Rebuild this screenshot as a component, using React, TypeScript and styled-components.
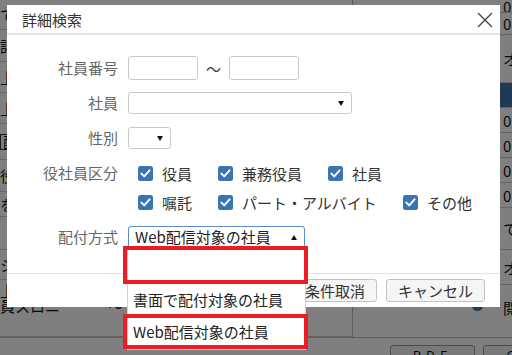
import React from "react";
import styled, { createGlobalStyle } from "styled-components";

const Global = createGlobalStyle`
  html, body { margin: 0; padding: 0; }
  body {
    width: 512px;
    height: 355px;
    overflow: hidden;
    font-family: "Noto Sans CJK JP", "Noto Sans", sans-serif;
  }
`;

const FONT = `"Noto Sans CJK JP", "Noto Sans", sans-serif`;

const Screen = styled.div`
  position: relative;
  width: 512px;
  height: 355px;
  overflow: hidden;
  background: #fff;
`;

/* ---------- background page ---------- */
const BgPage = styled.div`
  display: grid;
  grid-template-columns: 353px 159px;
  grid-template-rows: 337px 18px;
  height: 355px;
  font-family: ${FONT};
  font-size: 15px;
  color: #111;
`;

const BgLeft = styled.div`
  display: flex;
  flex-direction: column;
  border-right: 1px solid #bdbdbd;
`;

const BgRow = styled.div<{ $h: number; $top?: boolean }>`
  height: ${(p) => p.$h}px;
  box-sizing: border-box;
  border-bottom: 1px solid #c8c8c8;
  display: flex;
  flex-direction: column;
  justify-content: ${(p) => (p.$top ? "flex-start" : "center")};
  padding-top: ${(p) => (p.$top ? 3 : 0)}px;
  line-height: ${(p) => (p.$top ? 15 : 17)}px;
  white-space: nowrap;
  overflow: hidden;
`;

const BgBoxed = styled.span`
  display: inline-block;
  border: 1px solid #333;
  padding: 0 2px;
  line-height: 14px;
  width: fit-content;
`;

const BgRight = styled.div`
  display: flex;
  flex-direction: column;
`;

const BgCell = styled.div<{ $h: number; $blue?: boolean }>`
  height: ${(p) => p.$h}px;
  box-sizing: border-box;
  padding-left: 150px;
  display: flex;
  align-items: center;
  white-space: nowrap;
  overflow: hidden;
  border-bottom: 1px solid #c8c8c8;
  background: ${(p) => (p.$blue ? "#3d74ac" : "transparent")};
`;

const BgRadioRow = styled.div`
  flex: 1;
  display: flex;
  align-items: flex-start;
  padding: 12px 0 0 119px;
  gap: 20px;
  white-space: nowrap;
  overflow: hidden;
`;

const BgRadio = styled.span`
  width: 11px;
  height: 11px;
  margin-top: 3px;
  border-radius: 50%;
  background: #3d74ac;
  flex: none;
`;

const BgBottom = styled.div`
  grid-column: 1 / -1;
  border-top: 1px solid #bdbdbd;
  display: flex;
  gap: 8px;
  padding: 7px 0 0 390px;
`;

const BgButton = styled.div`
  width: 85px;
  height: 24px;
  box-sizing: border-box;
  border: 1px solid #999;
  border-radius: 3px;
  background: #f2f2f2;
  font-size: 13px;
  letter-spacing: 5px;
  text-align: center;
  line-height: 20px;
  flex: none;
`;

const Overlay = styled.div`
  position: absolute;
  inset: 0;
  background: rgba(0, 0, 0, 0.5);
`;

/* ---------- modal ---------- */
const Modal = styled.div`
  position: absolute;
  left: 7px;
  top: 5px;
  width: 493px;
  height: 302px;
  background: #fff;
  display: flex;
  flex-direction: column;
  font-family: ${FONT};
  font-size: 15px;
`;

const Header = styled.div`
  height: 28px;
  border-bottom: 2px solid #e3e3e3;
  display: flex;
  align-items: center;
  justify-content: space-between;
  padding: 0 7px 0 15px;
`;

const Title = styled.div`
  color: #333;
  font-size: 15px;
  line-height: 20px;
  margin-top: 1px;
`;

const CloseButton = styled.button`
  border: 0;
  background: none;
  padding: 0;
  width: 16px;
  height: 16px;
  display: flex;
  cursor: pointer;
  margin-top: 2px;
`;

const Body = styled.div`
  display: grid;
  grid-template-columns: 111px 1fr;
  column-gap: 10px;
  row-gap: 11px;
  padding-top: 21px;
  align-items: start;
`;

const Label = styled.div`
  text-align: right;
  color: #666;
  line-height: 24px;
  height: 24px;
  white-space: nowrap;
`;

const Control = styled.div`
  display: flex;
  align-items: center;
  min-height: 24px;
`;

const Range = styled.div`
  display: flex;
  align-items: center;
  gap: 8px;
`;

const TextInput = styled.input`
  width: 70px;
  height: 24px;
  box-sizing: border-box;
  border: 1px solid #c9c9c9;
  border-radius: 3px;
  padding: 0 4px;
  font: inherit;
  outline: none;
`;

const Tilde = styled.span`
  width: 15px;
  text-align: center;
  color: #444;
`;

const SelectWrap = styled.div<{ $w: number }>`
  position: relative;
  width: ${(p) => p.$w}px;
`;

const SelectBox = styled.div<{ $focused?: boolean }>`
  height: 22px;
  box-sizing: border-box;
  border: 1px solid ${(p) => (p.$focused ? "#5b8ec8" : "#c9c9c9")};
  border-radius: ${(p) => (p.$focused ? "3px 3px 0 0" : "3px")};
  display: flex;
  align-items: center;
  justify-content: space-between;
  padding: 0 7px 0 6px;
  color: #222;
  line-height: 20px;
  white-space: nowrap;
`;

const Arrow = styled.span<{ $up?: boolean }>`
  width: 0;
  height: 0;
  border-left: 3.5px solid transparent;
  border-right: 3.5px solid transparent;
  ${(p) =>
    p.$up
      ? "border-bottom: 5px solid #111;"
      : "border-top: 5px solid #111;"}
  flex: none;
`;

const CheckGroup = styled.div`
  display: flex;
  flex-direction: column;
  gap: 5px;
  padding-left: 10px;
`;

const CheckLine = styled.div`
  display: flex;
  gap: 26px;
`;

const CheckItem = styled.label`
  display: flex;
  align-items: center;
  gap: 9px;
  height: 24px;
  color: #333;
  white-space: nowrap;
`;

const DropList = styled.div`
  position: absolute;
  left: 0;
  top: 100%;
  width: 177px;
  background: #fff;
  display: flex;
  flex-direction: column;
  box-shadow: 0 0 0 1px #d0d0d0;
  z-index: 2;
`;

const DropItem = styled.div<{ $marked?: boolean; $h: number }>`
  height: ${(p) => p.$h}px;
  box-sizing: border-box;
  display: flex;
  align-items: center;
  color: #222;
  white-space: nowrap;
  padding-left: ${(p) => (p.$marked ? 6 : 5)}px;
  ${(p) =>
    p.$marked
      ? "border: 4px solid #ec1c24; margin: 0 -3px 0 -5px;"
      : ""}
  &:first-child {
    margin-top: -2px;
  }
`;

const Footer = styled.div`
  margin-top: auto;
  border-top: 1px solid #e3e3e3;
  display: flex;
  justify-content: flex-end;
  gap: 9px;
  padding: 5px 15px 5px;
`;

const Button = styled.button`
  height: 23px;
  box-sizing: border-box;
  padding: 0 11px;
  border: 1px solid #c4c4c4;
  border-radius: 3px;
  background: #f5f5f5;
  color: #333;
  font-family: ${FONT};
  font-size: 15px;
  line-height: 20px;
`;

const CheckIcon = () => (
  <svg width="15" height="15" viewBox="0 0 15 15">
    <rect x="0" y="0" width="15" height="15" rx="2.5" fill="#3a75b3" />
    <polyline
      points="3.4,7.6 6.2,10.4 11.6,4.4"
      fill="none"
      stroke="#fff"
      strokeWidth="2"
      strokeLinecap="round"
      strokeLinejoin="round"
    />
  </svg>
);

const CloseIcon = () => (
  <svg width="16" height="16" viewBox="0 0 16 16">
    <path d="M1 1 L15 15 M15 1 L1 15" stroke="#444" strokeWidth="1.4" />
  </svg>
);

const leftRows: { h: number; t: string[]; boxed?: boolean; top?: boolean }[] = [
  { h: 30, t: ["で"] },
  { h: 32, t: ["詳細"] },
  { h: 31, t: ["上"] },
  { h: 31, t: ["上"] },
  { h: 36, t: ["配"], boxed: true },
  { h: 32, t: ["役"] },
  { h: 25, t: ["を"] },
  { h: 33, t: [""] },
  { h: 30, t: ["シ"] },
  { h: 57, t: ["上", "員スロニー　ー 〜 仕"], top: true },
];

const rightRows: { h: number; t: string; blue?: boolean }[] = [
  { h: 13, t: "0" },
  { h: 22, t: "0" },
  { h: 48, t: "オス" },
  { h: 25, t: "", blue: true },
  { h: 25, t: "0" },
  { h: 25, t: "0" },
  { h: 25, t: "0" },
  { h: 25, t: "0" },
  { h: 42, t: "て" },
  { h: 35, t: "オス" },
];

const row1 = ["役員", "兼務役員", "社員"];
const row2 = ["嘱託", "パート・アルバイト", "その他"];

export default function App() {
  return (
    <Screen>
      <Global />
      <BgPage>
        <BgLeft>
          {leftRows.map((r, i) => (
            <BgRow key={i} $h={r.h} $top={r.top}>
              {r.t.map((s, j) =>
                r.boxed ? <BgBoxed key={j}>{s}</BgBoxed> : <span key={j}>{s}</span>
              )}
            </BgRow>
          ))}
        </BgLeft>
        <BgRight>
          {rightRows.map((r, i) => (
            <BgCell key={i} $h={r.h} $blue={r.blue}>
              {r.t}
            </BgCell>
          ))}
          <BgRadioRow>
            <BgRadio />
            <span>閲覧</span>
          </BgRadioRow>
        </BgRight>
        <BgBottom>
          <BgButton>PDF</BgButton>
          <BgButton>CSV</BgButton>
        </BgBottom>
      </BgPage>
      <Overlay />
      <Modal>
        <Header>
          <Title>詳細検索</Title>
          <CloseButton aria-label="close">
            <CloseIcon />
          </CloseButton>
        </Header>
        <Body>
          <Label>社員番号</Label>
          <Control>
            <Range>
              <TextInput />
              <Tilde>〜</Tilde>
              <TextInput />
            </Range>
          </Control>

          <Label>社員</Label>
          <Control>
            <SelectWrap $w={224}>
              <SelectBox>
                <span />
                <Arrow />
              </SelectBox>
            </SelectWrap>
          </Control>

          <Label>性別</Label>
          <Control>
            <SelectWrap $w={43}>
              <SelectBox>
                <span />
                <Arrow />
              </SelectBox>
            </SelectWrap>
          </Control>

          <Label>役社員区分</Label>
          <CheckGroup>
            <CheckLine>
              {row1.map((t) => (
                <CheckItem key={t}>
                  <CheckIcon />
                  {t}
                </CheckItem>
              ))}
            </CheckLine>
            <CheckLine>
              {row2.map((t) => (
                <CheckItem key={t}>
                  <CheckIcon />
                  {t}
                </CheckItem>
              ))}
            </CheckLine>
          </CheckGroup>

          <Label>配付方式</Label>
          <Control>
            <SelectWrap $w={177}>
              <SelectBox $focused>
                <span>Web配信対象の社員</span>
                <Arrow $up />
              </SelectBox>
              <DropList>
                <DropItem $marked $h={38} />
                <DropItem $h={30}>書面で配付対象の社員</DropItem>
                <DropItem $marked $h={35}>Web配信対象の社員</DropItem>
              </DropList>
            </SelectWrap>
          </Control>
        </Body>
        <Footer>
          <Button>条件取消</Button>
          <Button>キャンセル</Button>
        </Footer>
      </Modal>
    </Screen>
  );
}
